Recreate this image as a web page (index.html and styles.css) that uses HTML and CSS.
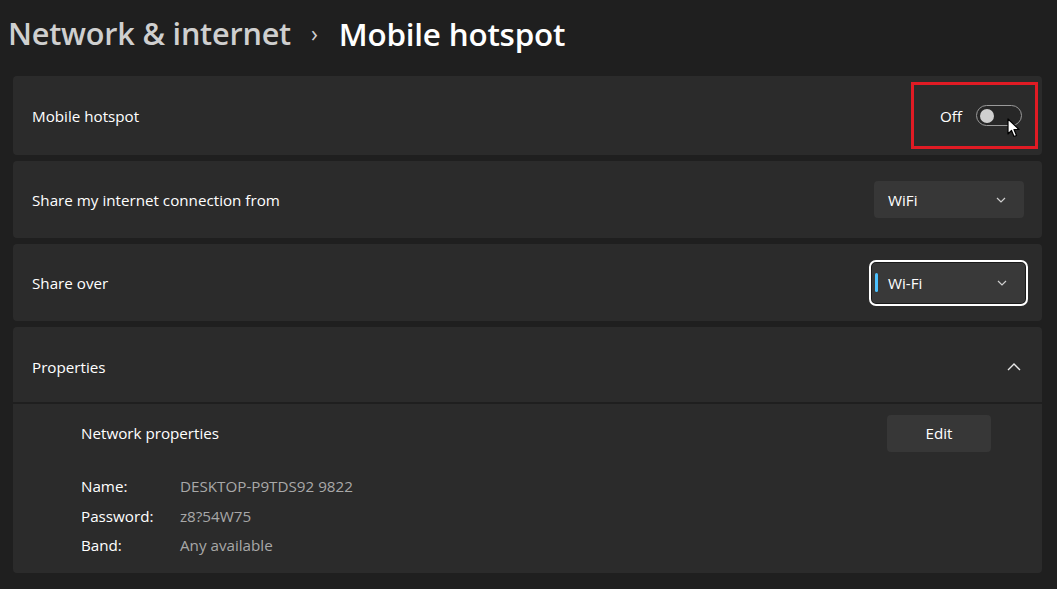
FILE: index.html
```html
<!DOCTYPE html>
<html>
<head>
<meta charset="utf-8">
<link rel="stylesheet" href="styles.css">
</head>
<body>
<div class="page">
  <h1 class="title"><span class="crumb">Network &amp; internet</span><span class="sep">›</span><span class="current">Mobile hotspot</span></h1>
  <div class="cards">
    <div class="card row">
      <span class="label">Mobile hotspot</span>
      <div class="toggle-wrap">
        <span class="state">Off</span>
        <span class="toggle"><span class="knob"></span></span>
        <svg class="cursor" width="14" height="20" viewBox="0 0 14 20"><path d="M1 1 L1 16 L4.5 12.5 L7 18.5 L9.5 17.5 L7 11.5 L12 11.5 Z" fill="#fff" stroke="#000" stroke-width="1.2" stroke-linejoin="round"/></svg>
      </div>
    </div>
    <div class="card row">
      <span class="label">Share my internet connection from</span>
      <div class="dropdown">
        <span>WiFi</span>
        <svg class="chev" width="10" height="6" viewBox="0 0 10 6"><path d="M1 1 L5 5 L9 1" fill="none" stroke="#cfcfcf" stroke-width="1.2"/></svg>
      </div>
    </div>
    <div class="card row">
      <span class="label">Share over</span>
      <div class="focus-ring">
        <div class="dropdown focused">
          <span class="accent"></span>
          <span>Wi-Fi</span>
          <svg class="chev" width="10" height="6" viewBox="0 0 10 6"><path d="M1 1 L5 5 L9 1" fill="none" stroke="#cfcfcf" stroke-width="1.2"/></svg>
        </div>
      </div>
    </div>
    <div class="card expander">
      <div class="row head">
        <span class="label">Properties</span>
        <svg class="chev-up" width="14" height="8" viewBox="0 0 14 8"><path d="M1 7 L7 1 L13 7" fill="none" stroke="#e8e8e8" stroke-width="1.4"/></svg>
      </div>
      <div class="body">
        <div class="body-head">
          <span class="label">Network properties</span>
          <button class="btn">Edit</button>
        </div>
        <dl class="props">
          <dt>Name:</dt><dd>DESKTOP-P9TDS92 9822</dd>
          <dt>Password:</dt><dd>z8?54W75</dd>
          <dt>Band:</dt><dd>Any available</dd>
        </dl>
      </div>
    </div>
  </div>
</div>
</body>
</html>
```
FILE: styles.css
```css
html, body {
  margin: 0;
  padding: 0;
  background: #1f1f1f;
}
body {
  font-family: "Open Sans", "Noto Sans", sans-serif;
  color: #ffffff;
  width: 1057px;
  height: 589px;
  overflow: hidden;
}
.page {
  padding: 0 15px 0 13px;
}
.title {
  margin: 0;
  height: 76px;
  display: flex;
  align-items: center;
  padding-bottom: 10px;
  box-sizing: border-box;
  margin-left: -5px;
  font-size: 30.6px;
  font-weight: 600;
  letter-spacing: -0.2px;
}
.crumb {
  color: #cfcfcf;
}
.sep {
  color: #cfcfcf;
  font-size: 23px;
  margin: 0 21px 0 20px;
  font-weight: 400;
}
.current {
  color: #ffffff;
  font-size: 31.4px;
}
.cards {
  display: flex;
  flex-direction: column;
  gap: 6px;
}
.card {
  background: #2b2b2b;
  border-radius: 4px;
}
.row {
  display: flex;
  align-items: center;
  justify-content: space-between;
  height: 79px;
  padding: 0 18px 0 19px;
  box-sizing: border-box;
}
.cards > .card.row:nth-child(2),
.cards > .card.row:nth-child(3) {
  height: 77px;
}
.label {
  font-size: 15.2px;
  color: #ffffff;
}
.toggle-wrap {
  position: relative;
  display: flex;
  align-items: center;
  gap: 14px;
  height: 67px;
  padding: 0 13px 0 26px;
  margin-right: -14px;
  border: 3px solid #e01b24;
  box-sizing: border-box;
}
.state {
  font-size: 15.2px;
}
.toggle {
  width: 46px;
  height: 21px;
  border: 1px solid #9a9a9a;
  border-radius: 12px;
  box-sizing: border-box;
  display: flex;
  align-items: center;
  padding-left: 3px;
  background: #272727;
}
.knob {
  width: 14px;
  height: 14px;
  border-radius: 50%;
  background: #d0d0d0;
}
.cursor {
  position: absolute;
  left: 93px;
  top: 33px;
}
.dropdown {
  width: 150px;
  height: 37px;
  background: #373737;
  border-radius: 4px;
  display: flex;
  align-items: center;
  justify-content: space-between;
  padding: 0 18px 0 14px;
  box-sizing: border-box;
  font-size: 15.2px;
  position: relative;
}
.focus-ring {
  border: 2px solid #ffffff;
  border-radius: 7px;
  padding: 1px;
  margin-right: -4px;
  background: #1a1a1a;
}
.dropdown.focused {
  width: 153px;
  height: 40px;
  padding-left: 16px;
  background: #393939;
  border-radius: 4px;
}
.accent {
  position: absolute;
  left: 3px;
  top: 10px;
  width: 3px;
  height: 19px;
  border-radius: 2px;
  background: #4cc2ff;
}
.dropdown.focused span:nth-child(2) {
  margin-right: auto;
}
.expander {
  height: 246px;
}
.head {
  height: 77px;
  border-bottom: 2px solid #1f1f1f;
  padding-right: 21px;
  padding-top: 4px;
}
.body {
  padding: 10px 51px 0 68px;
}
.body-head {
  display: flex;
  align-items: center;
  justify-content: space-between;
  height: 38px;
}
.btn {
  width: 104px;
  height: 37px;
  background: #373737;
  border: none;
  border-radius: 4px;
  color: #ffffff;
  font-family: "Open Sans", "Noto Sans", sans-serif;
  font-size: 15.2px;
}
.props {
  display: grid;
  grid-template-columns: 99px auto;
  row-gap: 5.5px;
  margin: 22px 0 0;
  font-size: 15.2px;
  line-height: 24px;
}
.props dt {
  color: #ffffff;
}
.props dd {
  margin: 0;
  color: #a8a8a8;
}
```
